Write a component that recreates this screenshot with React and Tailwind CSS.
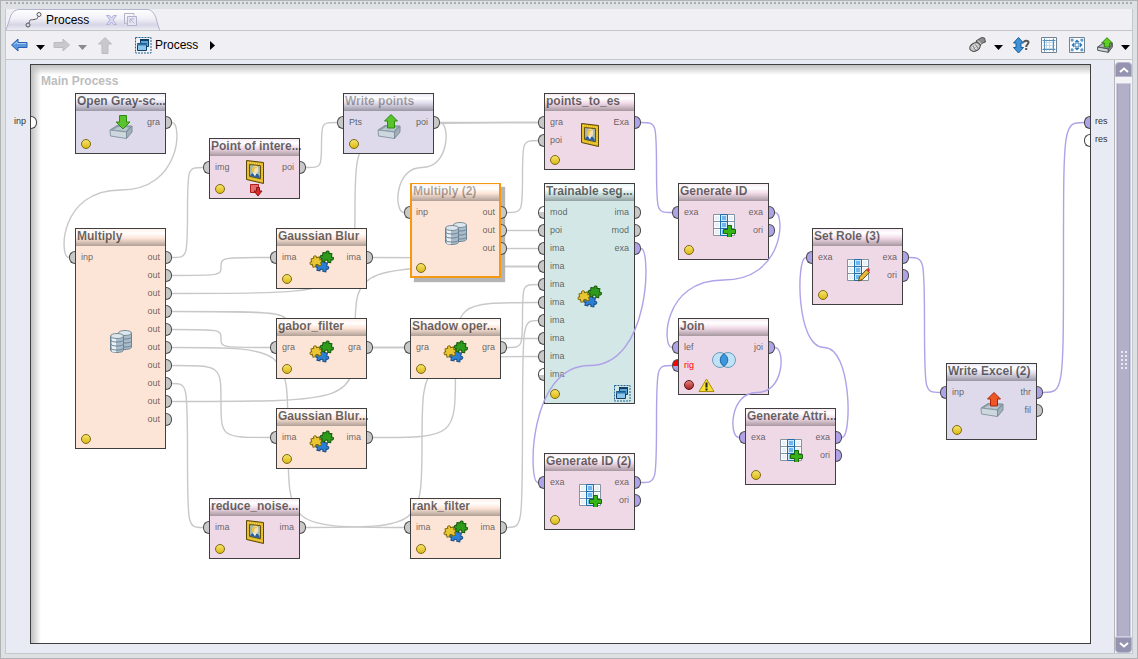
const COLORS = {
  violet: {
    body: "bg-[#dedaeb]",
    head: "bg-[linear-gradient(#eceaf5,#ffffff_25%,#dedaeb_55%,#9a97a4)]",
  },
  pink: {
    body: "bg-[#f0d9e6]",
    head: "bg-[linear-gradient(#f7ebf2,#ffffff_25%,#f0d9e6_55%,#a7979f)]",
  },
  peach: {
    body: "bg-[#fce4d7]",
    head: "bg-[linear-gradient(#fff1ea,#ffffff_25%,#fce4d7_55%,#b09f96)]",
  },
  teal: {
    body: "bg-[#d3e7e7]",
    head: "bg-[linear-gradient(#e9f5f5,#ffffff_25%,#d3e7e7_55%,#93a1a1)]",
  },
};

const PORT_FILL = {
  gray: "bg-[#c8c8c8]",
  violet: "bg-[#b0a2e8]",
  white: "bg-white",
  half: "bg-[linear-gradient(#ffffff_50%,#c8c8c8_50%)]",
  error: "bg-[linear-gradient(#ff0000_50%,#b0a2e8_50%)]",
};

const g = (name) => ({ name, kind: "gray" });
const v = (name) => ({ name, kind: "violet" });

// Operators sit on the free canvas, x and y are canvas coordinates
const OPERATORS = [
  { id: "open", name: "Open Gray-sc...", x: 44, y: 28, color: "violet", icon: "trayDown", ins: [], outs: [g("gra")] },
  { id: "poi", name: "Point of intere...", x: 178, y: 73, color: "pink", icon: "painting", ins: [g("img")], outs: [g("poi")], breakpoint: true },
  { id: "writePts", name: "Write points", x: 312, y: 28, color: "violet", icon: "trayUp", ins: [g("Pts")], outs: [g("poi")], disabled: true },
  { id: "toEs", name: "points_to_es", x: 513, y: 28, color: "pink", icon: "painting", ins: [g("gra"), g("poi")], outs: [v("Exa")] },
  { id: "mult", name: "Multiply", x: 44, y: 163, color: "peach", icon: "database", ins: [g("inp")], outs: Array(10).fill(g("out")) },
  { id: "mult2", name: "Multiply (2)", x: 379, y: 118, color: "peach", icon: "database", ins: [g("inp")], outs: Array(3).fill(g("out")), disabled: true, selected: true },
  { id: "blur", name: "Gaussian Blur", x: 245, y: 163, color: "peach", icon: "puzzle", ins: [g("ima")], outs: [g("ima")] },
  { id: "gabor", name: "gabor_filter", x: 245, y: 253, color: "peach", icon: "puzzle", ins: [g("gra")], outs: [g("gra")] },
  { id: "blur2", name: "Gaussian Blur...", x: 245, y: 343, color: "peach", icon: "puzzle", ins: [g("ima")], outs: [g("ima")] },
  { id: "shadow", name: "Shadow oper...", x: 379, y: 253, color: "peach", icon: "puzzle", ins: [g("gra")], outs: [g("gra")] },
  { id: "reduce", name: "reduce_noise...", x: 178, y: 433, color: "pink", icon: "painting", ins: [g("ima")], outs: [g("ima")] },
  { id: "rank", name: "rank_filter", x: 379, y: 433, color: "peach", icon: "puzzle", ins: [g("ima")], outs: [g("ima")] },
  {
    id: "train",
    name: "Trainable seg...",
    x: 513,
    y: 118,
    color: "teal",
    icon: "puzzle",
    ins: [{ name: "mod", kind: "half" }, g("poi"), ...Array(7).fill(g("ima")), { name: "ima", kind: "half" }],
    outs: [g("ima"), g("mod"), v("exa")],
    nested: true,
  },
  { id: "genId", name: "Generate ID", x: 647, y: 118, color: "pink", icon: "tablePlus", ins: [v("exa")], outs: [v("exa"), v("ori")] },
  { id: "role", name: "Set Role (3)", x: 781, y: 163, color: "pink", icon: "tableEdit", ins: [v("exa")], outs: [v("exa"), v("ori")] },
  { id: "join", name: "Join", x: 647, y: 253, color: "pink", icon: "venn", ins: [v("lef"), { name: "rig", kind: "error" }], outs: [v("joi")], warning: true },
  { id: "genAttr", name: "Generate Attri...", x: 714, y: 343, color: "pink", icon: "tablePlus", ins: [v("exa")], outs: [v("exa"), v("ori")] },
  { id: "genId2", name: "Generate ID (2)", x: 513, y: 388, color: "pink", icon: "tablePlus", ins: [v("exa")], outs: [v("exa"), v("ori")] },
  { id: "excel", name: "Write Excel (2)", x: 915, y: 298, color: "violet", icon: "trayExport", ins: [v("inp")], outs: [v("thr"), g("fil")] },
];

const GRAY_WIRES = [
  ["open", 0, "mult", 0],
  ["mult", 0, "poi", 0],
  ["mult", 1, "blur", 0],
  ["mult", 2, "toEs", 0],
  ["mult", 3, "shadow", 0],
  ["mult", 4, "gabor", 0],
  ["mult", 5, "rank", 0],
  ["mult", 6, "blur2", 0],
  ["mult", 7, "reduce", 0],
  ["mult", 8, "train", 3],
  ["poi", 0, "writePts", 0],
  ["writePts", 0, "toEs", 0],
  ["writePts", 0, "mult2", 0],
  ["mult2", 0, "toEs", 1],
  ["mult2", 1, "train", 1],
  ["mult2", 2, "train", 2],
  ["blur", 0, "train", 3],
  ["shadow", 0, "train", 4],
  ["blur2", 0, "train", 5],
  ["rank", 0, "train", 6],
  ["gabor", 0, "train", 7],
  ["reduce", 0, "train", 8],
];

const VIOLET_WIRES = [
  ["toEs", 0, "genId", 0],
  ["genId", 0, "join", 0],
  ["train", 2, "genId2", 0],
  ["genId2", 0, "join", 1],
  ["join", 0, "genAttr", 0],
  ["genAttr", 0, "role", 0],
  ["role", 0, "excel", 0],
  ["excel", 0, "result", 0],
];

function wirePath([from, out, to, inp]) {
  const a = OPERATORS.find((op) => op.id === from);
  const b = to === "result" ? { x: 1059, y: 28 } : OPERATORS.find((op) => op.id === to);
  const x1 = a.x + 97;
  const y1 = a.y + 29.5 + out * 18;
  const x2 = b.x - 6;
  const y2 = b.y + 29.5 + inp * 18;
  const mx = (x1 + x2) / 2;
  const my = (y1 + y2) / 2;
  if (x2 > x1) {
    return `M${x1} ${y1}C${mx} ${y1} ${mx} ${y1} ${mx} ${my}C${mx} ${y2} ${mx} ${y2} ${x2} ${y2}`;
  }
  return `M${x1} ${y1}C${x1 + 10} ${y1} ${x1 + 10} ${my} ${mx} ${my}C${x2 - 10} ${my} ${x2 - 10} ${y2} ${x2} ${y2}`;
}

function Wires({ wires, stroke }) {
  return (
    <svg className="absolute inset-0 w-full h-full pointer-events-none overflow-visible" fill="none" stroke={stroke} strokeWidth="1.4" aria-hidden="true">
      {wires.map((wire) => (
        <path key={wire.join("-")} d={wirePath(wire)} />
      ))}
    </svg>
  );
}

function Tray({ arrow, fill, stroke }) {
  return (
    <svg width="24" height="26" viewBox="0 0 24 26">
      <path d="M1 16l7-4.5 15 .5-5 6z" fill="#8fa0ab" stroke="#8595a0" />
      <path d="M4 16l5-3 11 .5-3 3.5z" fill="#b9c7cf" />
      <path d="M1 16l16.500 2v6.500L1.500 22z" fill="#ccd8de" stroke="#8a9aa5" />
      <path d="M17.500 18L23 12v6l-5.500 6.500z" fill="#9fb0ba" stroke="#7d8e99" />
      <path d={arrow} fill={fill} stroke={stroke} strokeLinejoin="round" />
    </svg>
  );
}

const ARROW_DOWN = "M10.500 1.500h7v6.500h3.500l-7 7-7-7h3.500z";
const ARROW_UP = "M14 0.500l6.500 6.500h-3v7h-7v-7h-3z";

function Cylinder({ x, y }) {
  return (
    <g transform={`translate(${x} ${y})`}>
      <path d="M0.500 3v14c0 1.500 3 2.500 6.500 2.500s6.500-1 6.500-2.500V3z" fill="#a9bccb" stroke="#6d8190" />
      <path d="M2 5v13.500c1 .5 3 .8 4 .8V6z" fill="#e9f1f6" />
      <path d="M0.500 7c1 1.500 3 2 6.500 2s5.500-.5 6.500-2M0.500 11c1 1.500 3 2 6.500 2s5.500-.5 6.500-2M0.500 15c1 1.500 3 2 6.500 2s5.500-.5 6.500-2" fill="none" stroke="#6d8190" />
      <ellipse cx="7" cy="3" rx="6.500" ry="2.500" fill="#dce6ec" stroke="#7b8c99" />
    </g>
  );
}

function PuzzlePiece({ transform, fill, stroke }) {
  return (
    <path
      transform={transform}
      d="M0 0h3c-.8-3 3.800-3 3 0h3v3.200c3-.8 3 3.600 0 2.800V9H6c.8-2.600-3.800-2.600-3 0H0V6c-2.800.8-2.800-3.800 0-3z"
      fill={fill}
      stroke={stroke}
    />
  );
}

function TableGrid() {
  return (
    <>
      <path d="M1.500 1.500h21v21h-21z" fill="#fff" stroke="#8394a0" />
      <path d="M3 3h4v4H3zM3 10h4v4H3zM3 17h4v4H3zM17 3h4v4h-4zM17 10h4v4h-4z" fill="#e6f1fa" />
      <path d="M1 8.500h22M1 15.500h22" stroke="#8394a0" />
      <path d="M8.500 1.500h7v21h-7z" fill="#cfe8fb" stroke="#1f6fae" />
      <path d="M10 3h4v4h-4zM10 10h4v4h-4zM10 17h4v4h-4z" fill="#6db6f2" />
      <path d="M8.500 8.500h7M8.500 15.500h7" stroke="#1f6fae" />
    </>
  );
}

function OperatorIcon({ name }) {
  switch (name) {
    case "trayDown":
      return <Tray arrow={ARROW_DOWN} fill="#59c22c" stroke="#2f8a14" />;
    case "trayUp":
      return <Tray arrow={ARROW_UP} fill="#59c22c" stroke="#2f8a14" />;
    case "trayExport":
      return <Tray arrow={ARROW_UP} fill="#ef5626" stroke="#a8260f" />;
    case "painting":
      return (
        <svg width="24" height="26" viewBox="0 0 24 26">
          <path d="M3.500 1.500l17 2v21l-17-4z" fill="#dfb51d" stroke="#5c4606" />
          <path d="M5 3.500l14 1.700v17l-14-3.200z" fill="none" stroke="#f8e36a" strokeDasharray="1 1" />
          <path d="M6.500 5.500l11 1.200v13l-11-2.400z" fill="#9fb6b3" stroke="#6b5208" />
          <path d="M7 17.300c1-3 2.500-3.300 4.500-3 3 .2 5 1.500 5.500 5.200z" fill="#2c5f9e" />
          <path d="M10 14l2 3.500 1.500-3.500z" fill="#f4f4f4" />
          <ellipse cx="12.300" cy="10.800" rx="3" ry="4" fill="#f5dfae" />
          <path d="M9 13c-1-5 2.500-7 5.500-4.500-2.500 0-3.500 1.500-3.500 5z" fill="#ecc23f" />
        </svg>
      );
    case "database":
      return (
        <svg width="24" height="24" viewBox="0 0 24 24">
          <Cylinder x={9} y={0} />
          <Cylinder x={1} y={3} />
        </svg>
      );
    case "puzzle":
      return (
        <svg width="26" height="24" viewBox="0 0 26 24">
          <PuzzlePiece transform="translate(9.500 11.500) rotate(10)" fill="#2b80d6" stroke="#174a80" />
          <PuzzlePiece transform="translate(2 9) rotate(-14) scale(.95)" fill="#e8c531" stroke="#7d6508" />
          <PuzzlePiece transform="translate(14 2.500) rotate(8)" fill="#2f9b1c" stroke="#155a0a" />
        </svg>
      );
    case "tablePlus":
      return (
        <svg width="24" height="24" viewBox="0 0 24 24">
          <TableGrid />
          <path d="M15.500 12.500h4v4h4v4h-4v4h-4v-4h-4v-4h4z" fill="#36b416" stroke="#1a6608" />
        </svg>
      );
    case "tableEdit":
      return (
        <svg width="24" height="24" viewBox="0 0 24 24">
          <TableGrid />
          <path d="M12.500 23l1-4 7-7.500 3 2.700-7 7.300z" fill="#e8bd3a" stroke="#5e4a10" />
          <path d="M20 12l1.500-1.500c1.500-.8 3 .8 2 2.200L22.300 14z" fill="#d9362c" />
        </svg>
      );
    default:
      return (
        <svg width="26" height="18" viewBox="0 0 26 18">
          <circle cx="9" cy="9" r="7.500" fill="#bfe2f7" stroke="#6f9cb8" />
          <circle cx="17" cy="9" r="7.500" fill="#bfe2f7" stroke="#6f9cb8" />
          <path d="M13 2.700c5 3.500 5 9 0 12.600-5-3.500-5-9 0-12.600z" fill="#3c97de" stroke="#1d659f" />
        </svg>
      );
  }
}

function WindowsIcon() {
  return (
    <svg width="17" height="17" viewBox="0 0 17 17" aria-hidden="true">
      <path d="M0.500 0.500h15.500v15.500H0.500z" fill="none" stroke="#1f6496" strokeDasharray="2 1" />
      <path d="M5.500 2.500h8v7h-8z" fill="#5aa6d8" stroke="#123f63" />
      <path d="M5 3h9" stroke="#123f63" strokeWidth="2" />
      <path d="M2.500 6.500h9v7h-9z" fill="#8cc6ec" stroke="#123f63" />
      <path d="M2 7.500h10" stroke="#2f76ab" strokeWidth="2" />
    </svg>
  );
}

function Port({ kind, side }) {
  const shape =
    side === "left"
      ? "rounded-l-full border-r-0 -ml-[7px] mr-1.5"
      : "rounded-r-full border-l-0 -mr-[7px] ml-1.5";
  return <span className={`w-1.5 h-[13px] shrink-0 border border-[#4a4a4a] ${shape} ${PORT_FILL[kind]}`} />;
}

function Operator({ op }) {
  const { body, head } = COLORS[op.color];
  return (
    <article
      className={`absolute flex flex-col w-[91px] min-h-[61px] border ${body} ${
        op.selected
          ? "border-[#f39a12] ring-1 ring-inset ring-[#f39a12] shadow-[4px_4px_1px_#b4b4b4]"
          : "border-[#3f3f3f]"
      }`}
      style={{ left: op.x, top: op.y }}
    >
      <h2
        className={`h-[17px] text-[12px] leading-[15px] font-bold whitespace-nowrap ${head} ${
          op.disabled ? "text-black/35" : "text-black/60"
        } ${op.selected ? "mx-px pl-px" : "pl-px"}`}
      >
        {op.name}
      </h2>
      <div className="flex-1 grid grid-cols-[1fr_auto_1fr] text-[9px] leading-[18px] text-black/60">
        <ul className="pt-0.5 pb-5">
          {op.ins.map((port, i) => (
            <li key={i} className={`flex items-center h-[18px] ${port.kind === "error" ? "text-[#ff0000]" : ""}`}>
              <Port kind={port.kind} side="left" />
              {port.name}
            </li>
          ))}
        </ul>
        <div className="self-center w-6 h-6 mb-2.5 flex items-center justify-center [&>svg]:shrink-0">
          <OperatorIcon name={op.icon} />
        </div>
        <ul className="pt-0.5 pb-5">
          {op.outs.map((port, i) => (
            <li key={i} className="flex items-center justify-end h-[18px]">
              {port.name}
              <Port kind={port.kind} side="right" />
            </li>
          ))}
        </ul>
      </div>
      <span
        className={`absolute left-[5px] bottom-1 w-2.5 h-2.5 rounded-full border ${
          op.warning
            ? "border-[#5c1414] bg-[linear-gradient(#e08080,#b02222)]"
            : "border-[#7d6a10] bg-[linear-gradient(#f6e36a,#dcb916)]"
        }`}
      />
      {op.warning && (
        <svg className="absolute left-[19px] bottom-[1px]" width="17" height="15" viewBox="0 0 17 15">
          <path d="M8.500 1L16 13.500H1z" fill="#f7e233" stroke="#a98d12" strokeLinejoin="round" />
          <path d="M8.500 4.500v5M8.500 10.500v2" stroke="#222" strokeWidth="2" />
        </svg>
      )}
      {op.nested && (
        <span className="absolute right-[3px] bottom-px">
          <WindowsIcon />
        </span>
      )}
      {op.breakpoint && (
        <svg className="absolute left-[39px] bottom-px" width="14" height="13" viewBox="0 0 14 13">
          <path d="M1.500 0.500h8v8h-8z" fill="#e36b6b" stroke="#b01c1c" />
          <path d="M7.500 3.500h3v3.500h2.500l-4 5-4-5h2.500z" fill="#d92b2b" stroke="#8f1414" />
        </svg>
      )}
    </article>
  );
}

function Caret({ className }) {
  return (
    <svg className={className} width="9" height="5" viewBox="0 0 9 5" aria-hidden="true">
      <path d="M0 0h9L4.500 5z" fill="currentColor" />
    </svg>
  );
}

function ToolButton({ label, className, children }) {
  return (
    <button type="button" aria-label={label} className={`flex items-center justify-center shrink-0 h-5 ${className}`}>
      {children}
    </button>
  );
}

function Toolbar() {
  return (
    <div className="flex items-center h-[30px] pl-[5px] border-y border-[#c4c6ca] bg-[#f0eff4]">
      <ToolButton label="Back" className="w-[17px]">
        <svg width="17" height="14" viewBox="0 0 17 14">
          <path d="M0.500 7l6.500-6v3.500h9v5H7V13z" fill="#5a97e0" stroke="#2a5fae" strokeLinejoin="round" />
          <path d="M3 6.500l3-2.500v1.500h9" fill="none" stroke="#a5ccf5" />
        </svg>
      </ToolButton>
      <ToolButton label="Back history" className="w-[9px] ml-2">
        <Caret className="text-black mt-1" />
      </ToolButton>
      <ToolButton label="Forward" className="w-[17px] ml-2">
        <svg width="17" height="14" viewBox="0 0 17 14">
          <path d="M16.500 7L10 1v3.500H1v5h9V13z" fill="#c9c9cb" stroke="#bcbcbe" />
        </svg>
      </ToolButton>
      <ToolButton label="Forward history" className="w-[9px] ml-2">
        <Caret className="text-[#8b8b8b] mt-1" />
      </ToolButton>
      <ToolButton label="Up" className="w-4 ml-2.5">
        <svg width="14" height="17" viewBox="0 0 14 17">
          <path d="M7 0.500L0.500 7H4v9.500h6V7h3.500z" fill="#c9c9cb" stroke="#bcbcbe" />
        </svg>
      </ToolButton>
      <nav className="flex items-center ml-[22px]" aria-label="Breadcrumb">
        <button type="button" className="flex items-center gap-[3px] text-[12px] text-black">
          <WindowsIcon />
          Process
        </button>
        <button type="button" aria-label="Show children" className="ml-3">
          <svg width="5" height="9" viewBox="0 0 5 9">
            <path d="M0 0v9l5-4.500z" />
          </svg>
        </button>
      </nav>
      <ToolButton label="Show operator details" className="w-[18px] ml-auto">
        <svg width="18" height="16" viewBox="0 0 18 16">
          <path d="M7 4l5.500-3.500 3 .5 1 4-3 1-3.500 4z" fill="#8b8d8c" stroke="#4f4f4f" />
          <ellipse cx="6" cy="10" rx="5.500" ry="4" fill="#c4c7c6" stroke="#4f4f4f" transform="rotate(-28 6 10)" />
          <path d="M3 11l5.500-3.500M5 12.500l4.500-3" stroke="#f4f4f4" />
          <path d="M4 9l2.500 4M6.500 7.500l2.500 4" stroke="#777" />
          <path d="M9 3.500l3.500 4" stroke="#e0e0e0" />
        </svg>
      </ToolButton>
      <ToolButton label="Detail options" className="w-[9px] ml-[7px]">
        <Caret className="text-black mt-1" />
      </ToolButton>
      <ToolButton label="Auto arrange" className="w-[17px] ml-2.5">
        <svg width="17" height="17" viewBox="0 0 17 17">
          <path d="M5.500 0.500L10.500 6H8v4.500h2.500l-5 5.500-5-5.500H3V6H0.500z" fill="#3f93d8" stroke="#1b5c96" strokeLinejoin="round" />
          <path d="M11 5.500c0-2.500 4.500-2.500 4.500 0 0 2-2.300 1.800-2.300 4.500M13.200 11v2" fill="none" stroke="#555" strokeWidth="2" />
        </svg>
      </ToolButton>
      <ToolButton label="Snap to grid" className="w-4 ml-[11px]">
        <svg width="16" height="16" viewBox="0 0 16 16" fill="none">
          <path d="M0.500 0.500h15v15H0.500z" fill="#fbfcfd" stroke="#6f8595" />
          <path d="M5.500 2v12M8.500 2v12M11.500 2v12M2 5.500h12M2 8.500h12M2 11.500h12" stroke="#c2d9ea" />
          <path d="M3.500 1.500v13M12.500 1.500v13M1.500 3.500h13M1.500 12.500h13" stroke="#5b8fb5" />
        </svg>
      </ToolButton>
      <ToolButton label="Fit to window" className="w-4 ml-3">
        <svg width="16" height="16" viewBox="0 0 16 16" fill="none">
          <path d="M0.500 0.500h15v15H0.500z" fill="#fbfcfd" stroke="#6f8595" />
          <path d="M3 1.500v3.500M1.500 3H5M13 1.500v3.500M14.500 3H11M3 14.500V11M1.500 13H5M13 14.500V11M14.500 13H11" stroke="#3c7fb2" />
          <path d="M8 2.500l2.500 2.500h-5zM8 13.500l2.500-2.500h-5zM2.500 8l2.500-2.500v5zM13.500 8L11 5.500v5z" fill="#2a78b8" />
          <path d="M6 6h4v4H6z" stroke="#2a78b8" />
        </svg>
      </ToolButton>
      <ToolButton label="Export" className="w-4 ml-3">
        <svg width="16" height="16" viewBox="0 0 24 24">
          <path d="M1 15l7-5h15l-5 8z" fill="#a9b3b9" stroke="#555" strokeWidth="1.500" />
          <path d="M1 15l16 3v5L1 20z" fill="#cfd6da" stroke="#555" strokeWidth="1.500" />
          <path d="M17 18l6-8v5l-6 8z" fill="#7f8b92" stroke="#555" strokeWidth="1.500" />
          <path d="M15 1l8 8h-4v6h-8V9H7z" fill="#5ed022" stroke="#2c8010" strokeWidth="1.500" />
        </svg>
      </ToolButton>
      <ToolButton label="Export options" className="w-[9px] ml-2 mr-0.5">
        <Caret className="text-black mt-1" />
      </ToolButton>
    </div>
  );
}

function TabBar() {
  return (
    <div className="flex items-end h-[21px] bg-[#f0eff4]">
      <div className="relative flex items-center h-[21px] w-[154px] pl-[19px]">
        <svg className="absolute inset-0 w-full h-full" viewBox="0 0 154 21" preserveAspectRatio="none" aria-hidden="true">
          <defs>
            <linearGradient id="tab" x2="0" y2="1">
              <stop offset="0" stopColor="#ffffff" />
              <stop offset=".45" stopColor="#f1f0f7" />
              <stop offset=".75" stopColor="#d6d5e6" />
              <stop offset="1" stopColor="#eeedf4" />
            </linearGradient>
          </defs>
          <path d="M0 21L5 6Q8 0.500 12 0.500H142Q147 1 150 9L153.500 21" fill="url(#tab)" stroke="#b3b3cf" />
        </svg>
        <button type="button" className="relative flex items-center gap-1 text-[12px] text-black">
          <svg width="17" height="16" viewBox="0 0 17 16" fill="none" stroke="#555" aria-hidden="true">
            <circle cx="3" cy="13" r="2" />
            <circle cx="14" cy="2.500" r="2" />
            <path d="M4 11C6 6 4 8.500 9 7.500s3-1 4-3" />
          </svg>
          Process
        </button>
        <button type="button" aria-label="Close tab" className="relative ml-[17px]">
          <svg width="11" height="10" viewBox="0 0 11 10">
            <path d="M0.500 0.500h3l2 2.500 2-2.500h3L7 5l3.500 4.500h-3l-2-2.500-2 2.500h-3L4 5z" fill="#dcdbf3" stroke="#b3b1d6" />
          </svg>
        </button>
        <button type="button" aria-label="Detach tab" className="relative ml-[7px]">
          <svg width="13" height="13" viewBox="0 0 13 13" fill="none" stroke="#b3b1cb">
            <path d="M10 2.500V0.500H0.500v10h2" />
            <path d="M3.500 3.500h9v9h-9z" fill="#e6e5f4" />
            <path d="M10.500 10.500l-4-4M6 10V6h4" />
          </svg>
        </button>
      </div>
    </div>
  );
}

function ScrollBar() {
  return (
    <div className="flex flex-col w-[18px] pt-0.5 border-l border-[#b5b5ba] bg-[#f4f4f7]">
      <button type="button" aria-label="Scroll up" className="flex items-center justify-center h-[15px] rounded-t bg-[#9594b0] border border-[#b9b8d0]">
        <svg width="10" height="6" viewBox="0 0 10 6" fill="none" stroke="#fff" strokeWidth="2">
          <path d="M1 5l4-3.500L9 5" />
        </svg>
      </button>
      <div className="flex-1 flex items-center justify-center mt-1.5 mx-px border border-[#cfcee0] bg-[#b1b0c8] shadow-[inset_1px_0_#a3a2bd,inset_-1px_0_#a3a2bd]">
        <div className="w-2 h-5 bg-[radial-gradient(#e9e9f4_1px,transparent_1px)] bg-size-[4px_4px]" />
      </div>
      <button type="button" aria-label="Scroll down" className="flex items-center justify-center h-4 rounded-b bg-[#9594b0] border border-[#b9b8d0]">
        <svg width="10" height="6" viewBox="0 0 10 6" fill="none" stroke="#fff" strokeWidth="2">
          <path d="M1 1l4 3.500L9 1" />
        </svg>
      </button>
    </div>
  );
}

function Canvas() {
  return (
    <main className="relative flex-1 mt-1 ml-6 mr-[23px] mb-[9px] border border-[#3f3f3f] bg-[linear-gradient(#c0c0c0,transparent_10px),linear-gradient(to_right,#c0c0c0,transparent_10px),linear-gradient(#ffffff,#ffffff)]">
      <h1 className="pl-2.5 pt-2 text-[12px] leading-4 font-bold text-[#bdbdbd]">Main Process</h1>

      <Wires wires={GRAY_WIRES} stroke="#c8c8c8" />
      {OPERATORS.map((op) => (
        <Operator key={op.id} op={op} />
      ))}
      <Wires wires={VIOLET_WIRES} stroke="#b0a2e8" />

      <div className="absolute -left-[17px] top-12 flex items-center h-[18px] text-[9px] text-[#333]">
        <span className="w-[17px]">inp</span>
        <span className="w-1.5 h-[13px] rounded-r-full border border-l-0 border-[#3f3f3f] bg-white" />
      </div>
      <ul className="absolute left-[1053px] top-12 text-[9px] text-[#333]">
        <li className="flex items-center h-[18px]">
          <span className="w-1.5 h-[13px] mr-[5px] rounded-l-full border border-r-0 border-[#3f3f3f] bg-[#b0a2e8]" />
          res
        </li>
        <li className="flex items-center h-[18px]">
          <span className="w-1.5 h-[13px] mr-[5px] rounded-l-full border border-r-0 border-[#3f3f3f] bg-white" />
          res
        </li>
      </ul>
    </main>
  );
}

export default function App() {
  return (
    <div className="flex flex-col min-h-screen px-1 pb-1 border border-[#b0b2b4] bg-[#dde1e4] font-['Liberation_Sans',Arial,sans-serif]">
      <div className="h-2 bg-[radial-gradient(#a9adb1_1px,transparent_1px)] bg-size-[4px_4px] bg-repeat-x" />
      <div className="flex-1 flex flex-col border-x border-b border-[#c3c9cd] bg-[#e8ebf4]">
        <TabBar />
        <Toolbar />
        <div className="flex-1 flex">
          <Canvas />
          <ScrollBar />
        </div>
      </div>
    </div>
  );
}
